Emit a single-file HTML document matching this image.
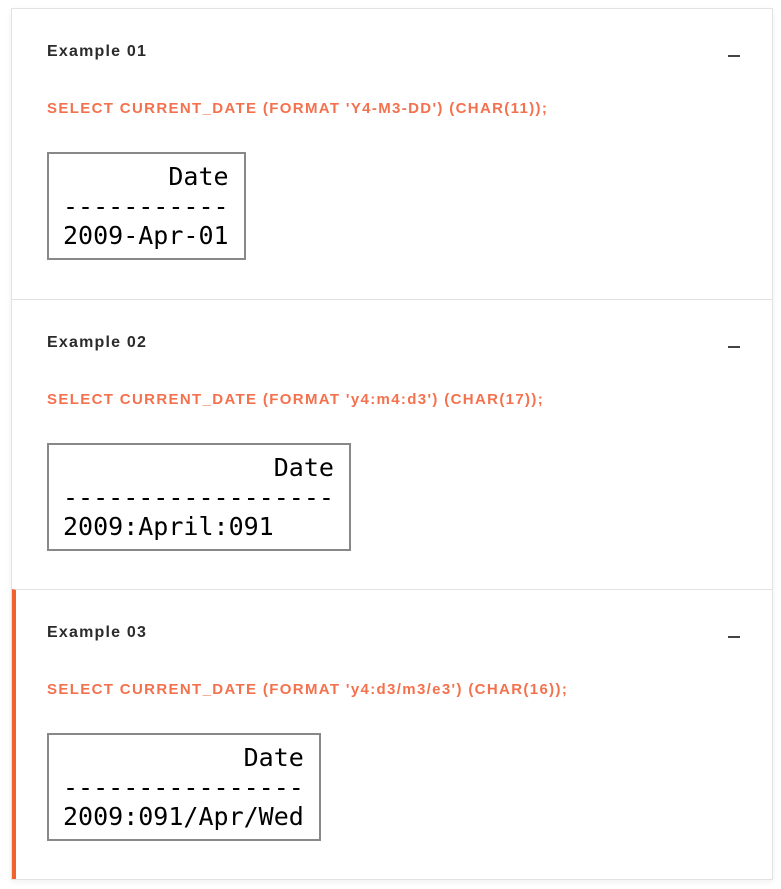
<!DOCTYPE html>
<html><head><style>
body{margin:0;background:#fff;width:781px;height:889px;overflow:hidden;font-family:"Liberation Sans",sans-serif;}
.card{position:absolute;left:11px;top:8px;width:760px;border:1px solid #e2e2e2;box-shadow:0 2px 6px rgba(0,0,0,0.06);background:#fff;}
.sec{position:relative;height:290px;border-top:1px solid #e2e2e2;box-sizing:border-box;}
.sec:first-child{border-top:none;height:290px;}
.sec.act{border-left:4px solid #f2622e;}
.t{position:absolute;left:35px;top:34px;font-weight:bold;font-size:16px;color:#2b2b2b;letter-spacing:1.2px;}
.m{position:absolute;right:32px;top:46px;width:12px;height:2px;background:#444;}
.q{position:absolute;left:35px;top:91px;font-weight:bold;font-size:15px;color:#f4714e;letter-spacing:1.35px;}
.b{position:absolute;left:35px;top:143px;border:2px solid #888;padding:8px 15px 7px 14px;font-family:"DejaVu Sans Mono","Liberation Mono",monospace;font-size:25px;line-height:29.5px;white-space:pre;color:#000;}
.act .t,.act .q,.act .b{left:31px}
</style></head><body>
<div class="card">
<div class="sec"><div class="t">Example 01</div><div class="m"></div><div class="q">SELECT CURRENT_DATE (FORMAT 'Y4-M3-DD') (CHAR(11));</div><div class="b">       Date
-----------
2009-Apr-01</div></div>
<div class="sec"><div class="t">Example 02</div><div class="m"></div><div class="q">SELECT CURRENT_DATE (FORMAT 'y4:m4:d3') (CHAR(17));</div><div class="b">              Date
------------------
2009:April:091</div></div>
<div class="sec act"><div class="t">Example 03</div><div class="m"></div><div class="q">SELECT CURRENT_DATE (FORMAT 'y4:d3/m3/e3') (CHAR(16));</div><div class="b">            Date
----------------
2009:091/Apr/Wed</div></div>
</div>
</body></html>
